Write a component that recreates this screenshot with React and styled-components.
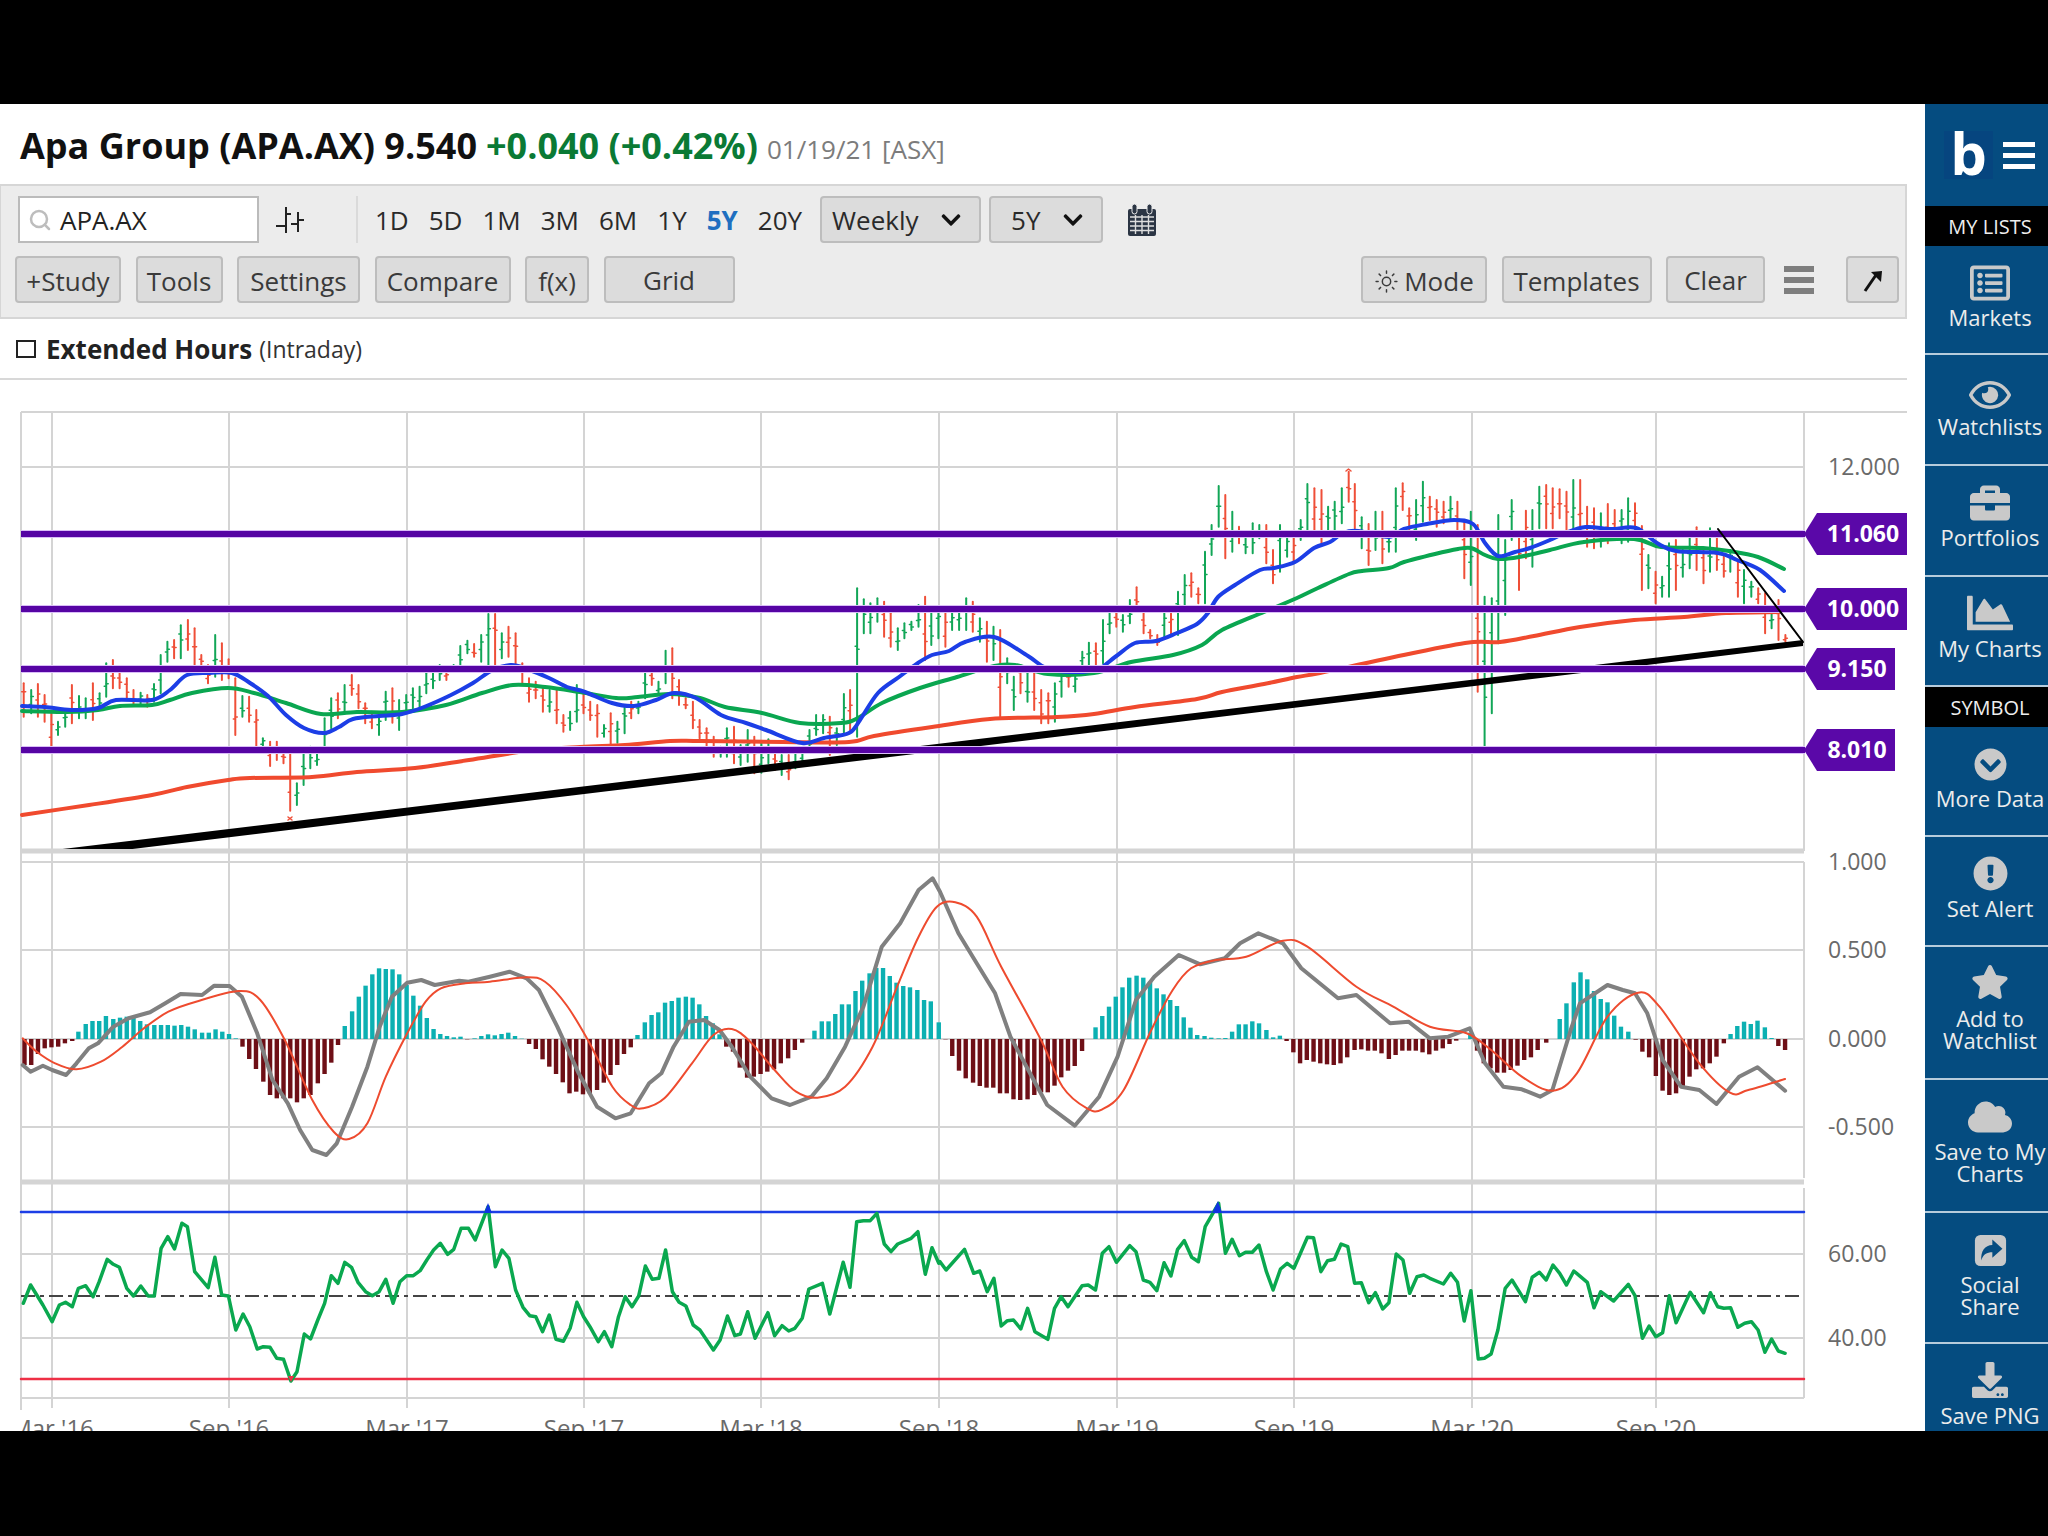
import React from 'react';
import styled, { createGlobalStyle } from 'styled-components';
import { Search, Sun } from 'lucide-react';
import { FaRegListAlt, FaRegEye, FaBriefcase, FaChartArea, FaChevronCircleDown, FaExclamationCircle, FaStar, FaCloud, FaDownload, FaChevronDown } from 'react-icons/fa';

const Global = createGlobalStyle`
  html, body { margin: 0; padding: 0; background: #000; }
  body { font-family: "Open Sans", "Liberation Sans", sans-serif; width: 2048px; height: 1536px; overflow: hidden; }
`;

const Screen = styled.div`display: flex; flex-direction: column; width: 2048px; height: 1536px; background: #000;`;
const Letterbox = styled.div`height: ${p => p.$h}px; flex: none; background: #000;`;
const Main = styled.div`display: flex; height: 1327px; flex: none; background: #fff; overflow: hidden;`;
const Content = styled.div`width: 1925px; flex: none; display: flex; flex-direction: column;`;

const TitleBar = styled.div`height: 80px; flex: none; display: flex; align-items: baseline; padding: 18px 0 0 20px; box-sizing: border-box; gap: 9px; color: #111;`;
const Name = styled.span`font-size: 36px; font-weight: 700; line-height: 48px; color: ${p => p.$color || '#111'}; white-space: nowrap;`;
const Stamp = styled.span`font-size: 26px; color: #7c7c7c; line-height: 48px; white-space: nowrap;`;

const Toolbar = styled.div`width: 1907px; height: 135px; flex: none; box-sizing: border-box; background: #ececec; border: 2px solid #d6d6d6; border-left-width: 1px; padding: 10px 6px 0 14px; display: flex; flex-direction: column; gap: 13px;`;
const Row = styled.div`display: flex; align-items: center; height: 47px; flex: none;`;
const SearchBox = styled.div`width: 241px; height: 47px; box-sizing: border-box; margin-left: 3px; background: #fff; border: 2px solid #bbb; display: flex; align-items: center; padding-left: 8px; gap: 8px; font-size: 26px; color: #222; svg { color: #bdbdbd; }`;
const IconSlot = styled.span`display: inline-flex; margin-left: ${p => p.$left || 0}px;`;
const Divider = styled.span`width: 2px; height: 47px; background: #dadada; margin: 0 17px 0 51px;`;
const Ranges = styled.div`display: flex; gap: 20px; font-size: 26px; margin-right: 18px;`;
const RangeItem = styled.span`color: ${p => p.$on ? '#1f6fc0' : '#2a2a2a'}; font-weight: ${p => p.$on ? 700 : 400};`;
const SelectBox = styled.div`width: ${p => p.$w}px; height: 47px; box-sizing: border-box; margin-right: 8px; background: #dcdcdc; border: 2px solid #bdbdbd; border-radius: 4px; display: flex; align-items: center; justify-content: space-between; padding: 0 17px 0 ${p => p.$pad}px; font-size: 26px; color: #2a2a2a; svg { font-size: 22px; color: #111; }`;
const Spacer = styled.div`flex: 1;`;
const Buttons = styled.div`display: flex; gap: 14.5px; align-items: center;`;
const Btn = styled.button`height: 47px; width: ${p => p.$w}px; box-sizing: border-box; padding: ${p => p.$raised ? 0 : 3}px 0 0; background: #dcdcdc; border: 2px solid #bdbdbd; border-radius: 4px; font: 400 26px "Open Sans", sans-serif; color: #3a3a3a; display: inline-flex; align-items: center; justify-content: center; gap: 5px; white-space: nowrap;`;
const BurgerWrap = styled.div`display: flex; flex-direction: column; gap: 5px; margin: 0 32px 0 19px; width: 30px;`;
const BurgerBar = styled.span`height: 6px; background: #7e7e7e; display: block;`;

const ExtRow = styled.div`height: 59px; flex: none; display: flex; align-items: center; padding-left: 16px; box-sizing: border-box;`;
const Check = styled.span`width: 20px; height: 18px; box-sizing: border-box; border: 2px solid #222; margin-right: 10px;`;
const ExtLabel = styled.span`font-size: 26px; font-weight: 700; color: #222; margin-right: 7px;`;
const ExtNote = styled.span`font-size: 23px; color: #333;`;
const Rule = styled.div`width: 1907px; height: 2px; flex: none; background: #d8d8d8;`;

const Chart = styled.svg`display: block; width: 1925px; height: 1051px; flex: none;`;
const Grid = styled.line`stroke: #d4d4d4; stroke-width: ${p => p.$w || 2};`;
const Trace = styled.polyline`fill: none; stroke: ${p => p.$c}; stroke-width: ${p => p.$w}; stroke-linejoin: round; stroke-linecap: round;`;
const Curve = styled.path`fill: none; stroke: ${p => p.$c}; stroke-width: ${p => p.$w}; stroke-linejoin: round; stroke-linecap: round;`;
const Level = styled.rect`fill: #5604a4;`;
const LevelHalo = styled.rect`fill: #d9bdf7;`;
const Tag = styled.polygon`fill: #5a08a8;`;
const TagText = styled.text`font: 700 23px "Open Sans", sans-serif; fill: #fff; text-anchor: middle;`;
const AxisText = styled.text`font: 400 23px "Open Sans", sans-serif; fill: #6a6a6a;`;
const DateText = styled.text`font: 400 24px "Open Sans", sans-serif; fill: #6a6a6a; text-anchor: middle;`;

const Side = styled.nav`width: 123px; flex: none; background: #054c80; display: flex; flex-direction: column; color: #ececec;`;
const Brand = styled.div`height: 102px; flex: none; display: flex; align-items: center; padding-left: 19px; gap: 10px; box-sizing: border-box;`;
const BrandMark = styled.div`width: 49px; height: 48px; background: #06457f; color: #fff; font: 700 58px/44px "Open Sans", sans-serif; text-align: center;`;
const BrandBurger = styled.div`display: flex; flex-direction: column; gap: 6px; width: 32px;`;
const BrandBar = styled.span`height: 5px; background: #fff; display: block;`;
const SideHead = styled.div`height: 40px; flex: none; background: #000; color: #eee; font-size: 20px; padding-left: 7px; display: flex; align-items: center; justify-content: center;`;
const NavItem = styled.div`height: ${p => p.$h}px; flex: none; box-sizing: border-box; border-bottom: ${p => p.$last ? 0 : 2}px solid #b7ccdc; padding: 13px 0 0 7px; display: flex; flex-direction: column; align-items: center; text-align: center;`;
const NavIcon = styled.div`height: 41px; display: flex; align-items: flex-end; justify-content: center; color: #c9c9c9; svg { display: block; width: ${p => p.$size}px; height: ${p => p.$size}px; margin-bottom: ${p => -p.$drop}px; }`;
const NavLabel = styled.div`font-size: 22px; line-height: 22px; margin-top: 6px; white-space: pre; `;

// ---- chart data, read off the reference ----
const blue = [[22,706],[45,707],[71,710],[98,708],[116,700],[152,700],[170,690],[187,675],[210,673],[232,673],[250,683],[268,696],[286,715],[304,728],[324,733],[339,727],[353,719],[379,716],[402,714],[424,707],[451,695],[473,683],[491,671],[511,665],[527,669],[549,678],[567,687],[585,692],[612,703],[634,706],[656,700],[674,693],[696,698],[721,715],[746,723],[766,730],[802,743],[824,738],[849,733],[860,720],[878,693],[899,677],[918,663],[932,655],[949,651],[965,642],[994,637],[1028,656],[1046,668],[1073,672],[1098,669],[1115,657],[1135,643],[1156,641],[1177,633],[1197,624],[1208,613],[1218,597],[1235,585],[1260,570],[1274,568],[1295,562],[1314,548],[1330,542],[1343,533],[1358,531],[1389,537],[1404,529],[1427,524],[1454,520],[1473,524],[1485,543],[1498,556],[1515,552],[1530,548],[1550,540],[1565,533],[1586,527],[1611,529],[1636,528],[1657,543],[1676,551],[1718,553],[1737,560],[1760,570],[1784,591]];
const green = [[22,711],[67,712],[98,710],[120,706],[152,705],[170,700],[192,693],[228,688],[254,693],[286,703],[321,714],[357,712],[402,712],[446,705],[482,693],[513,685],[545,687],[580,692],[616,698],[638,697],[670,694],[700,698],[725,707],[762,713],[800,723],[841,723],[858,718],[882,703],[920,688],[957,677],[990,667],[1015,665],[1048,674],[1094,673],[1131,662],[1173,655],[1202,645],[1222,630],[1264,612],[1297,598],[1318,588],[1349,574],[1362,571],[1389,568],[1404,562],[1435,554],[1458,549],[1471,548],[1485,555],[1498,559],[1519,557],[1550,550],[1584,542],[1634,539],[1661,547],[1703,548],[1729,551],[1758,557],[1784,569]];
const redMa = [[22,815],[89,805],[152,795],[187,787],[228,780],[250,778],[312,777],[357,772],[415,768],[469,760],[527,751],[580,747],[625,745],[670,741],[700,741],[783,742],[849,742],[874,736],[932,727],[990,719],[1057,717],[1094,714],[1135,707],[1197,699],[1222,692],[1264,684],[1297,677],[1320,673],[1385,659],[1465,643],[1500,642],[1534,636],[1580,627],[1634,620],[1684,617],[1726,613],[1779,612]];

const barsA = [[53,850,950,0],[70,870,940,1],[85,852,950,0],[100,885,965,0],[115,935,1040,0],[130,965,1005,1],[146,930,980,1],[161,855,970,0],[177,888,955,1],[192,895,955,1],[208,850,960,0],[223,880,930,1],[238,790,890,1],[253,780,865,0],[268,810,865,0],[284,835,895,0],[299,870,915,0],[315,878,915,1],[330,885,920,0],[345,852,905,1],[360,765,880,1],[375,725,785,1],[390,720,775,0],[405,676,775,1],[421,660,750,0],[436,685,795,0],[451,765,800,0],[466,795,850,0],[482,705,830,1],[497,730,840,0],[512,778,835,0],[527,835,1005,0],[543,888,950,1],[558,890,965,0],[574,930,1040,0],[589,1015,1040,1],[605,1025,1098,0],[620,1025,1080,0],[635,1060,1090,0],[650,1060,1232,0],[665,1150,1215,1],[680,1060,1155,1],[695,1040,1105,1],[710,1060,1095,1],[727,955,1040,1],[742,895,985,1],[757,880,955,0],[772,855,935,1],[788,825,885,0],[803,855,925,0],[818,910,970,0],[833,935,985,0],[849,945,1005,1],[864,875,960,1],[879,865,968,0],[894,900,990,1],[910,885,935,1],[925,865,925,1],[940,860,920,1],[955,820,880,1],[970,815,865,1],[985,795,840,1],[1000,800,840,0],[1016,795,815,1],[1031,738,800,1],[1047,722,760,1],[1062,732,770,0],[1078,705,785,1],[1094,642,795,1],[1109,642,795,0],[1124,700,775,1],[1139,680,770,0],[1155,700,795,0],[1170,790,850,0],[1185,835,905,0],[1200,845,895,0],[1216,860,935,0],[1231,870,935,1],[1247,870,970,0],[1262,945,995,0],[1277,935,990,1],[1292,855,965,1],[1307,880,940,0],[1322,905,960,0],[1338,915,1010,0],[1353,975,1010,1],[1368,940,1035,0],[1383,965,1028,1],[1399,915,1000,1],[1414,905,955,0],[1430,905,940,1],[1445,815,895,1],[1460,815,855,0],[1475,845,885,1],[1491,752,850,1],[1506,745,895,0],[1521,840,915,0],[1536,895,925,0],[1552,905,985,0],[1567,960,1015,0]];
const barsB = [[16,985,1040,0],[33,1010,1070,0],[50,1040,1070,1],[65,985,1070,1],[82,980,1090,0],[98,1035,1095,1],[115,990,1085,1],[131,1010,1120,0],[148,1030,1118,1],[165,1018,1090,1],[181,1050,1110,0],[197,1065,1125,1],[214,1065,1138,0],[230,1060,1105,1],[247,1060,1095,1],[264,990,1050,1],[280,945,1005,1],[297,945,1000,1],[313,950,1065,0],[330,985,1035,1],[347,882,1000,1],[362,870,990,0],[379,565,1010,1],[395,598,700,1],[411,610,700,1],[428,595,665,1],[444,605,710,0],[460,640,740,0],[477,685,750,1],[493,670,715,1],[510,665,690,1],[527,615,680,1],[543,590,780,0],[558,630,735,1],[575,625,715,1],[592,635,740,0],[608,635,690,1],[625,635,690,1],[642,595,690,1],[658,605,695,0],[675,655,725,1],[692,665,785,0],[708,680,780,1],[724,690,950,0],[741,775,850,1],[757,830,930,1],[773,795,880,0],[790,820,905,1],[806,820,930,0],[823,870,970,0],[840,880,970,0],[856,850,965,1],[872,800,890,1],[889,815,860,0],[905,815,875,1],[922,755,800,1],[938,728,800,1],[955,730,800,0],[972,660,790,1],[988,635,700,1],[1004,630,680,0],[1020,645,695,1],[1037,600,670,1],[1053,562,630,0],[1070,630,700,0],[1086,690,715,0],[1103,705,735,0],[1120,635,710,1],[1136,640,705,0],[1153,575,705,1],[1169,525,615,1],[1185,520,590,0],[1202,565,610,0],[1218,455,610,1],[1234,375,465,1],[1251,258,380,1],[1267,285,475,0],[1284,335,455,1],[1300,380,430,0],[1316,410,460,1],[1333,370,460,1],[1349,375,415,1],[1366,375,490,0],[1382,450,550,0],[1399,375,515,1],[1416,405,470,1],[1432,410,490,0],[1449,360,420,1],[1465,252,395,1],[1482,265,400,0],[1499,270,430,0],[1515,320,390,1],[1531,305,390,1],[1548,265,370,1]];
const barsC = [[75,215,305,0],[91,252,385,0],[109,352,445,1],[127,372,495,0],[145,335,450,1],[163,335,490,0],[180,415,455,1],[198,265,455,1],[216,250,330,0],[233,325,390,0],[251,300,420,1],[269,245,365,1],[287,290,360,0],[305,300,380,0],[323,305,370,0],[341,290,360,1],[359,305,400,0],[377,365,535,0],[394,335,555,1],[412,375,875,0],[430,590,1040,1],[449,595,940,1],[466,345,730,1],[484,420,645,1],[501,300,420,1],[520,410,570,0],[538,332,475,0],[555,330,500,1],[573,260,385,1],[591,255,385,0],[608,265,385,0],[626,268,355,0],[644,275,390,0],[662,240,390,1],[680,240,410,0],[698,320,440,0],[716,325,445,0],[734,340,440,1],[752,312,430,0],[770,330,420,0],[788,330,430,1],[805,295,425,1],[823,310,400,0],[841,378,570,0],[858,465,565,1],[877,515,610,0],[894,530,590,1],[912,430,590,1],[930,420,570,0],[948,450,530,1],[966,410,505,1],[984,382,510,0],[1002,445,550,0],[1019,385,515,1],[1037,410,510,0],[1055,470,530,0],[1072,450,515,1],[1092,480,590,0],[1108,510,610,1],[1127,545,590,1],[1145,565,610,0],[1163,580,700,0],[1180,640,685,1],[1198,600,720,0],[1216,705,725,0]];
const priceBars = [
  ...barsA.map(([x, t, b, u]) => [x / 2.24, 400 + t / 3, 400 + b / 3, u]),
  ...barsB.map(([x, t, b, u]) => [700 + x / 2.412, 400 + t / 3, 400 + b / 3, u]),
  ...barsC.map(([x, t, b, u]) => [1320 + x / 2.613, 400 + t / 3, 400 + b / 3, u]),
];

const macdY = y => 850 + y / 3;
const macdA = x => x / 1.633;
const macdB = x => 940 + x / 1.633;
const rsiY = y => 1170 + y / 3;
const join = (a, b, fy) => [...a.map(([x, y]) => [macdA(x), fy(y)]), ...b.map(([x, y]) => [macdB(x), fy(y)])];
const line = pts => pts.map(([x, y]) => `${x.toFixed(1)},${y.toFixed(1)}`).join(' ');
const smooth = pts => {
  let d = `M${pts[0][0]} ${pts[0][1]}`;
  for (let i = 0; i < pts.length - 1; i++) {
    const p0 = pts[i - 1] || pts[i], p1 = pts[i], p2 = pts[i + 1], p3 = pts[i + 2] || p2;
    const c1 = [p1[0] + (p2[0] - p0[0]) / 6, p1[1] + (p2[1] - p0[1]) / 6];
    const c2 = [p2[0] - (p3[0] - p1[0]) / 6, p2[1] - (p3[1] - p1[1]) / 6];
    d += ` C${c1[0].toFixed(1)} ${c1[1].toFixed(1)} ${c2[0].toFixed(1)} ${c2[1].toFixed(1)} ${p2[0].toFixed(1)} ${p2[1].toFixed(1)}`;
  }
  return d;
};

const macdGrayA = [[37,645],[50,665],[70,647],[85,660],[108,675],[125,640],[145,595],[160,580],[185,530],[210,505],[245,487],[270,460],[295,432],[330,435],[350,407],[375,408],[395,440],[420,550],[445,690],[470,760],[490,840],[510,900],[533,915],[550,880],[575,770],[600,650],[620,530],[640,440],[665,398],[688,390],[710,405],[750,392],[765,395],[800,380],[832,365],[860,385],[880,420],[910,530],[945,670],[975,770],[1005,805],[1030,790],[1060,700],[1080,670],[1100,590],[1125,515],[1150,510],[1175,540],[1195,590],[1225,680],[1260,745],[1290,765],[1325,740],[1350,685],[1380,590],[1410,470],[1440,290],[1470,220],[1500,120],[1523,85]];
const macdGrayB = [[0,125],[30,250],[60,340],[90,430],[115,560],[150,680],[175,765],[220,827],[260,740],[290,620],[320,450],[350,380],[390,315],[425,343],[465,325],[490,280],[520,250],[560,280],[590,355],[650,445],[680,435],[735,520],[765,515],[800,565],[830,560],[865,535],[890,640],[920,710],[950,718],[980,740],[1000,720],[1030,540],[1045,460],[1090,405],[1115,420],[1135,430],[1155,490],[1180,630],[1210,710],[1240,720],[1268,762],[1305,680],[1335,652],[1380,722]];
const macdRedA = [[37,565],[60,605],[90,640],[125,658],[165,635],[200,590],[235,535],[275,485],[320,455],[390,423],[425,450],[465,570],[510,750],[545,845],[570,867],[600,820],[630,680],[665,550],[695,455],[720,415],[760,400],[800,395],[860,382],[890,395],[925,465],[960,570],[1000,710],[1030,765],[1050,775],[1085,745],[1130,640],[1165,555],[1195,537],[1225,575],[1265,660],[1300,725],[1335,743],[1380,710],[1425,590],[1465,410],[1500,260],[1530,170]];
const macdRedB = [[25,157],[60,200],[100,350],[165,570],[200,710],[240,775],[265,778],[300,720],[345,540],[380,420],[410,355],[450,330],[500,320],[560,272],[600,290],[680,410],[740,470],[800,530],[860,550],[900,600],[950,680],[1000,722],[1040,670],[1090,500],[1140,428],[1175,470],[1240,640],[1290,728],[1320,720],[1380,687]];
const histA = [[40,645],[51,645],[62,612],[73,595],[84,592],[95,590],[106,580],[118,573],[128,545],[140,522],[151,513],[162,513],[173,498],[185,507],[196,503],[207,500],[218,503],[229,513],[240,523],[252,525],[263,525],[274,525],[285,527],[296,525],[307,530],[318,538],[330,548],[341,548],[352,538],[363,545],[374,552],[385,565],[396,590],[407,627],[418,657],[430,695],[441,735],[452,745],[463,745],[474,745],[485,757],[496,745],[507,735],[519,700],[530,672],[541,638],[552,585],[563,528],[575,484],[586,440],[597,407],[608,373],[619,355],[630,357],[641,358],[652,373],[664,405],[675,437],[686,467],[697,504],[708,537],[719,552],[730,558],[741,562],[752,560],[763,568],[775,565],[786,558],[797,553],[808,556],[819,552],[830,548],[841,558],[852,566],[864,582],[875,597],[886,628],[897,650],[908,672],[919,697],[930,730],[941,725],[952,733],[963,730],[975,720],[986,698],[997,675],[1008,645],[1019,612],[1030,592],[1041,555],[1053,517],[1064,495],[1075,487],[1086,458],[1097,453],[1108,443],[1120,440],[1131,443],[1142,463],[1153,498],[1164,520],[1175,553],[1186,590],[1197,605],[1208,653],[1220,683],[1231,680],[1242,672],[1253,665],[1264,658],[1275,640],[1287,625],[1298,600],[1310,578],[1330,542],[1342,514],[1353,514],[1364,492],[1375,463],[1386,463],[1397,423],[1408,392],[1420,370],[1431,354],[1442,354],[1453,378],[1464,398],[1475,408],[1486,412],[1498,420],[1509,450],[1520,454],[1533,517]];
const histB = [[9,568],[20,618],[31,662],[42,685],[54,698],[65,708],[76,713],[87,713],[98,730],[109,730],[120,748],[131,750],[143,748],[154,735],[165,727],[176,727],[187,707],[198,682],[209,662],[220,648],[232,603],[254,532],[265,498],[276,470],[287,440],[298,412],[309,383],[321,377],[332,383],[343,395],[354,415],[365,433],[376,450],[387,468],[398,502],[409,533],[420,555],[432,558],[443,563],[455,565],[466,564],[477,545],[488,523],[499,523],[510,514],[521,520],[533,540],[544,562],[555,557],[566,573],[577,607],[588,640],[599,630],[610,635],[621,640],[632,643],[643,645],[654,640],[665,622],[677,600],[688,598],[699,602],[710,602],[721,610],[733,627],[744,615],[755,602],[766,602],[777,602],[788,607],[799,613],[810,602],[821,595],[832,582],[843,572],[866,548],[877,602],[888,640],[899,655],[910,668],[921,668],[932,660],[943,647],[954,630],[965,622],[976,600],[990,578],[1012,507],[1023,460],[1035,397],[1046,367],[1057,388],[1068,423],[1079,447],[1090,457],[1101,497],[1112,530],[1124,545],[1136,569],[1147,605],[1158,622],[1169,678],[1180,722],[1191,735],[1202,730],[1213,713],[1224,680],[1235,658],[1246,655],[1257,640],[1268,620],[1280,580],[1291,552],[1302,528],[1313,515],[1324,522],[1335,512],[1347,532],[1358,564],[1369,588],[1380,600]];
const histBars = [...histA.map(([x, y]) => [macdA(x), macdY(y)]), ...histB.map(([x, y]) => [macdB(x), macdY(y)])];

const rsiA = [[38,400],[50,345],[70,405],[85,455],[97,405],[107,397],[118,410],[128,355],[140,347],[152,380],[162,335],[175,268],[185,283],[195,292],[207,355],[218,378],[230,348],[242,378],[252,378],[263,235],[274,200],[285,237],[297,160],[306,170],[318,305],[340,353],[351,262],[362,375],[373,378],[385,480],[397,432],[408,470],[420,537],[430,530],[441,532],[452,565],[463,568],[475,633],[485,605],[497,492],[507,507],[519,450],[530,400],[541,317],[552,340],[563,277],[574,292],[585,338],[597,365],[608,377],[619,365],[630,328],[642,400],[653,335],[664,317],[675,317],[686,302],[697,270],[708,240],[719,220],[731,253],[741,238],[753,175],[765,175],[776,210],[797,110],[809,290],[820,240],[831,265],[842,360],[854,412],[865,437],[875,440],[886,485],[897,435],[908,508],[920,514],[931,475],[942,397],[953,440],[965,475],[977,515],[987,485],[999,530],[1010,440],[1021,380],[1032,410],[1043,378],[1054,288],[1065,328],[1076,325],[1087,240],[1098,365],[1109,397],[1120,408],[1132,465],[1143,480],[1165,540],[1176,510],[1188,438],[1200,497],[1209,492],[1221,425],[1233,505],[1254,428],[1265,497],[1277,467],[1288,483],[1298,475],[1310,445],[1321,357],[1343,340],[1355,432],[1366,355],[1377,277],[1388,352],[1399,155],[1410,152],[1421,152],[1432,130],[1444,222],[1455,245],[1466,222],[1488,205],[1499,185],[1511,313],[1522,233],[1533,280]];
const rsiB = [[0,275],[10,300],[40,238],[55,310],[65,303],[77,365],[88,325],[100,468],[110,452],[120,450],[132,477],[143,415],[155,485],[176,508],[187,415],[198,380],[209,410],[232,347],[242,345],[254,360],[265,250],[276,230],[288,277],[310,227],[320,245],[332,330],[343,337],[354,362],[366,278],[377,318],[388,238],[399,212],[411,262],[422,275],[433,170],[455,100],[466,250],[477,208],[489,257],[499,247],[510,247],[521,225],[533,305],[544,360],[556,297],[567,280],[578,295],[600,202],[610,203],[622,305],[633,272],[644,268],[655,222],[666,230],[677,340],[688,338],[700,398],[711,368],[723,417],[733,398],[745,252],[756,270],[767,370],[779,320],[790,315],[800,325],[822,342],[834,310],[845,337],[856,453],[867,362],[879,567],[889,565],[900,552],[911,480],[923,355],[934,330],[956,395],[967,322],[979,307],[990,330],[1001,285],[1012,310],[1023,345],[1035,303],[1046,320],[1057,337],[1068,413],[1079,365],[1100,393],[1124,343],[1135,377],[1147,505],[1158,468],[1169,500],[1180,488],[1191,377],[1202,458],[1225,367],[1247,428],[1258,368],[1270,410],[1280,415],[1291,413],[1303,472],[1314,460],[1325,455],[1336,480],[1347,547],[1358,507],[1369,543],[1380,550]];

const verticals = [52, 229, 407, 584, 761, 939, 1117, 1294, 1472, 1656];
const dates = ["Mar '16", "Sep '16", "Mar '17", "Sep '17", "Mar '18", "Sep '18", "Mar '19", "Sep '19", "Mar '20", "Sep '20"];
const levels = [[534, '11.060', 1907], [609, '10.000', 1907], [669, '9.150', 1895], [750, '8.010', 1895]];
const axis = [[467, '12.000'], [862, '1.000'], [950, '0.500'], [1039, '0.000'], [1127, '-0.500'], [1254, '60.00'], [1338, '40.00']];
const hLines = [467, 862, 950, 1127, 1254, 1338, 1398];

const PriceChart = () => (
  <Chart viewBox="0 380 1925 1051">
    <defs>
      <clipPath id="dates"><rect x="21" y="1400" width="1904" height="40" /></clipPath>
      <clipPath id="price"><rect x="21" y="412" width="1786" height="437" /></clipPath>
    </defs>
    <Grid x1="21" x2="1907" y1="412" y2="412" />
    {hLines.map(y => <Grid key={y} x1="21" x2="1804" y1={y} y2={y} />)}
    {verticals.map(x => <Grid key={x} x1={x} x2={x} y1="412" y2="1408" />)}
    <Grid x1="21" x2="21" y1="412" y2="1410" />
    <Grid x1="1804" x2="1804" y1="412" y2="851" />
    <Grid x1="1804" x2="1804" y1="862" y2="1178" />
    <Grid x1="1804" x2="1804" y1="1188" y2="1398" />
    <Grid x1="21" x2="1804" y1="851" y2="851" $w="5" />
    <Grid x1="21" x2="1804" y1="1182" y2="1182" $w="5" />

    {priceBars.map(([x, t, b, u], i) => {
      const c = u ? '#12a657' : '#ef4f38';
      const m = t + (b - t) * (0.25 + ((i * 37) % 50) / 100);
      const n = t + (b - t) * (0.25 + ((i * 53) % 50) / 100);
      return <g key={i}><Trace $c={c} $w="2" points={`${x.toFixed(1)},${t.toFixed(1)} ${x.toFixed(1)},${b.toFixed(1)}`} /><Trace $c={c} $w="1.5" points={`${(x - 2).toFixed(1)},${m.toFixed(1)} ${x.toFixed(1)},${m.toFixed(1)}`} /><Trace $c={c} $w="1.5" points={`${x.toFixed(1)},${n.toFixed(1)} ${(x + 2).toFixed(1)},${n.toFixed(1)}`} /></g>;
    })}
    <Trace $c="#ef4f38" $w="1.5" points="1346,471 1348.5,469 1351,471" />
    <Trace $c="#ef4f38" $w="1.5" points="288,817 292,820" />
    <Trace $c="#ef4f38" $w="1.5" points="292,817 288,820" />
    <Curve $c="#f04a2e" $w="4" d={smooth(redMa)} />
    <g clipPath="url(#price)"><polygon points="46,851 1803,640 1803,646 116,851" fill="#000" /></g>
    <Curve $c="#0aa650" $w="4" d={smooth(green)} />
    <Curve $c="#1c3ee6" $w="4" d={smooth(blue)} />
    {levels.map(([y]) => <g key={y}><LevelHalo x="21" width="1784" y={y - 4} height="8" /><Level x="21" width="1784" y={y - 3} height="6" /></g>)}
    <Trace $c="#000" $w="2" points="1718,529 1803,642" />
    {levels.map(([y, t, r]) => (
      <g key={t}>
        <Tag points={`1804,${y} 1817,${y - 21} ${r},${y - 21} ${r},${y + 21} 1817,${y + 21}`} />
        <TagText x={(1817 + r) / 2 + 1} y={y + 8}>{t}</TagText>
      </g>
    ))}

    <Grid x1="21" x2="1804" y1="1039" y2="1039" />
    {histBars.map(([x, y], i) => (
      <rect key={i} x={x - 2.2} width="4.4" y={Math.min(y, 1039)} height={Math.abs(y - 1039)} fill={y < 1039 ? '#0cb0b2' : '#6e0f16'} />
    ))}
    <Trace $c="#808080" $w="4" points={line(join(macdGrayA, macdGrayB, macdY))} />
    <Curve $c="#ee4b2f" $w="2" d={smooth(join(macdRedA, macdRedB, macdY))} />

    <Trace $c="#1c3ee6" $w="2.5" points="21,1212 1804,1212" />
    <Trace $c="#ee2f45" $w="2.5" points="21,1379 1804,1379" />
    <line x1="21" x2="1804" y1="1296" y2="1296" stroke="#444" strokeWidth="2" strokeDasharray="14 5 4 5" />
    <Trace $c="#0aa84f" $w="3.5" points={line(join(rsiA, rsiB, rsiY))} />
    <polygon points="488,1203 484,1213 492,1213" fill="#1033e0" />
    <polygon points="1218,1201 1212,1213 1222,1213" fill="#1033e0" />
    <polygon points="291,1382 288,1376 294,1376" fill="#ee2f45" />

    {axis.map(([y, t]) => <AxisText key={t} x="1828" y={y + 8}>{t}</AxisText>)}
    <g clipPath="url(#dates)">
      {dates.map((d, i) => <DateText key={d} x={verticals[i]} y="1437">{d}</DateText>)}
    </g>
  </Chart>
);

const BarsGlyph = () => (
  <svg width="30" height="28" viewBox="0 0 30 28" fill="none" stroke="#222" strokeWidth="2">
    <path d="M11 1v26M11 8h5M11 20H1M23 6v20M23 14h6M23 18h-7" />
  </svg>
);
const CalendarGlyph = () => (
  <svg width="28" height="32" viewBox="0 0 28 32">
    <rect x="0" y="5" width="28" height="27" rx="2" fill="#2b3544" />
    <rect x="4" y="0" width="5" height="10" rx="2.5" fill="#2b3544" stroke="#ececec" strokeWidth="1" />
    <rect x="19" y="0" width="5" height="10" rx="2.5" fill="#2b3544" stroke="#ececec" strokeWidth="1" />
    <path d="M2 13h24M2 17.5h24M2 22h24M2 26.500h24M7.500 11v19M14 11v19M20.500 11v19" stroke="#ddd" strokeWidth="1.4" />
  </svg>
);
const ArrowGlyph = () => (
  <svg width="22" height="22" viewBox="0 0 22 22"><path d="M3 21 L14 5" stroke="#111" strokeWidth="3" /><path d="M9 2 L20 1 L19 12 Z" fill="#111" /></svg>
);
const ShareGlyph = () => (
  <svg viewBox="0 0 36 36">
    <rect x="1" y="1" width="34" height="34" rx="6" fill="#c9c9c9" />
    <path d="M20 6 L31 16 L20 26 V20 C14 20 10 22 8 29 C7 19 12 12 20 12 Z" fill="#054c80" />
  </svg>
);

const nav1 = [
  ['Markets', FaRegListAlt, 40, 109, 3],
  ['Watchlists', FaRegEye, 42, 111, 7],
  ['Portfolios', FaBriefcase, 40, 111, 3],
  ['My Charts', FaChartArea, 46, 110, 5],
];
const nav2 = [
  ['More Data', FaChevronCircleDown, 33, 110, 0],
  ['Set Alert', FaExclamationCircle, 35, 110, 0],
  ['Add to\nWatchlist', FaStar, 38, 133, 0],
  ['Save to My\nCharts', FaCloud, 44, 133, 5],
  ['Social\nShare', ShareGlyph, 33, 131, 0],
  ['Save PNG', FaDownload, 36, 89, 0, true],
];
const NavList = ({ items }) => items.map(([label, Icon, size, h, drop, last]) => (
  <NavItem key={label} $h={h} $last={last}>
    <NavIcon $size={size} $drop={drop}><Icon /></NavIcon>
    <NavLabel>{label}</NavLabel>
  </NavItem>
));

export default function App() {
  return (
    <Screen>
      <Global />
      <Letterbox $h={104} />
      <Main>
        <Content>
          <TitleBar>
            <Name>Apa Group (APA.AX) 9.540</Name>
            <Name $color="#0a7a35">+0.040 (+0.42%)</Name>
            <Stamp>01/19/21 [ASX]</Stamp>
          </TitleBar>
          <Toolbar>
            <Row>
              <SearchBox><Search size={24} strokeWidth={2.5} />APA.AX</SearchBox>
              <IconSlot $left={16}><BarsGlyph /></IconSlot>
              <Divider />
              <Ranges>
                {['1D', '5D', '1M', '3M', '6M', '1Y', '5Y', '20Y'].map(r => <RangeItem key={r} $on={r === '5Y'}>{r}</RangeItem>)}
              </Ranges>
              <SelectBox $w={161} $pad={10}>Weekly<FaChevronDown /></SelectBox>
              <SelectBox $w={114} $pad={20}>5Y<FaChevronDown /></SelectBox>
              <IconSlot $left={17}><CalendarGlyph /></IconSlot>
            </Row>
            <Row>
              <Buttons>
                <Btn $w={106}>+Study</Btn>
                <Btn $w={87}>Tools</Btn>
                <Btn $w={123}>Settings</Btn>
                <Btn $w={136}>Compare</Btn>
                <Btn $w={64}>f(x)</Btn>
                <Btn $w={131} $raised>Grid</Btn>
              </Buttons>
              <Spacer />
              <Buttons>
                <Btn $w={126}><Sun size={25} strokeWidth={1.4} />Mode</Btn>
                <Btn $w={150}>Templates</Btn>
                <Btn $w={99} $raised>Clear</Btn>
              </Buttons>
              <BurgerWrap><BurgerBar /><BurgerBar /><BurgerBar /></BurgerWrap>
              <Btn $w={53}><ArrowGlyph /></Btn>
            </Row>
          </Toolbar>
          <ExtRow>
            <Check />
            <ExtLabel>Extended Hours</ExtLabel>
            <ExtNote>(Intraday)</ExtNote>
          </ExtRow>
          <Rule />
          <PriceChart />
        </Content>
        <Side>
          <Brand>
            <BrandMark>b</BrandMark>
            <BrandBurger><BrandBar /><BrandBar /><BrandBar /></BrandBurger>
          </Brand>
          <SideHead>MY LISTS</SideHead>
          <NavList items={nav1} />
          <SideHead>SYMBOL</SideHead>
          <NavList items={nav2} />
        </Side>
      </Main>
      <Letterbox $h={105} />
    </Screen>
  );
}
